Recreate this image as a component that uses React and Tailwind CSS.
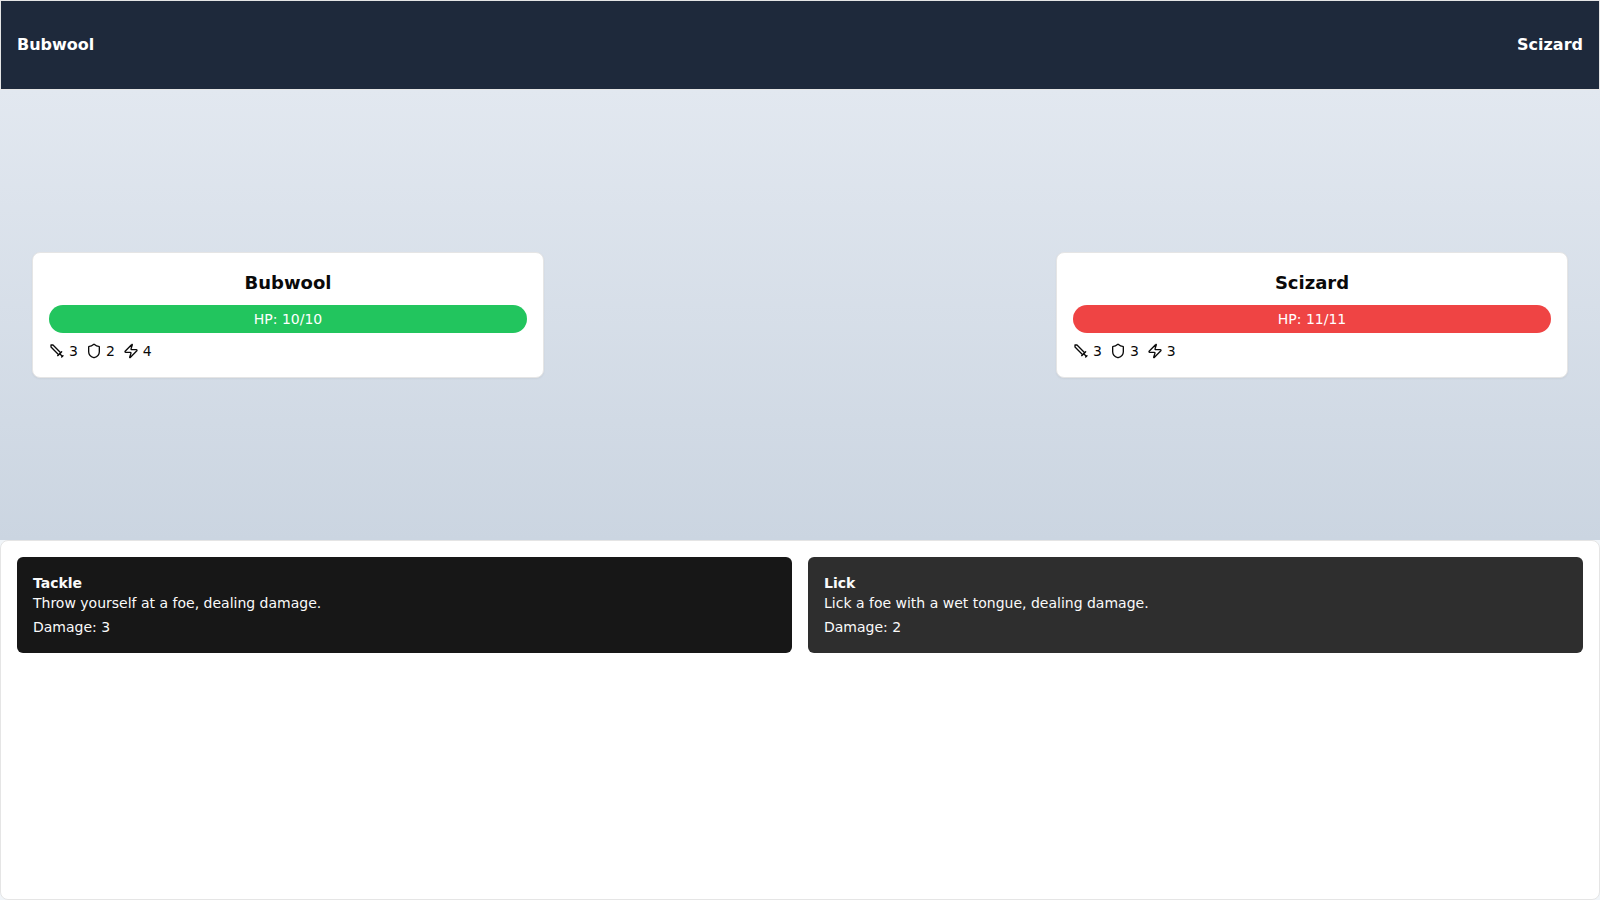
import { Shield, Zap } from "lucide-react";

const creatures = [
  { name: "Bubwool", hp: "10/10", bar: "bg-[#22c55e]", stats: [3, 2, 4] },
  { name: "Scizard", hp: "11/11", bar: "bg-[#ef4444]", stats: [3, 3, 3] },
];

function Sword({ className }) {
  return (
    <svg
      className={className}
      viewBox="0 0 24 24"
      fill="none"
      stroke="currentColor"
      strokeWidth="2"
      strokeLinecap="round"
      strokeLinejoin="round"
    >
      <polyline points="14.5 17.5 3 6 3 3 6 3 17.5 14.5" />
      <line x1="13" x2="19" y1="19" y2="13" />
      <line x1="16" x2="20" y1="16" y2="20" />
      <line x1="19" x2="21" y1="21" y2="19" />
    </svg>
  );
}

const icons = [Sword, Shield, Zap];

function CreatureCard({ creature }) {
  return (
    <div className="w-1/3 rounded-lg border border-[#e5e5e5] bg-white p-4 shadow-xs">
      <h2 className="mb-2 text-center text-lg font-bold">{creature.name}</h2>
      <div className={`mb-2 rounded-full py-1 text-center text-sm text-white ${creature.bar}`}>
        HP: {creature.hp}
      </div>
      <div className="flex gap-2 text-sm">
        {creature.stats.map((value, i) => {
          const Icon = icons[i];
          return (
            <div key={i} className="flex items-center gap-1">
              <Icon className="size-4" />
              {value}
            </div>
          );
        })}
      </div>
    </div>
  );
}

function Move({ name, description, damage, color }) {
  return (
    <button className={`flex h-24 flex-col items-start justify-center rounded-md px-4 text-left text-sm text-[#fafafa] ${color}`}>
      <span className="font-bold">{name}</span>
      <span>{description}</span>
      <span className="mt-1">Damage: {damage}</span>
    </button>
  );
}

export default function App() {
  return (
    <div className="flex h-screen flex-col bg-[#f1f5f9] font-['DejaVu_Sans',sans-serif] text-[#0a0a0a]">
      <header className="flex h-[90px] shrink-0 items-center justify-between border border-[#e5e5e5] bg-[#1e293b] px-4 font-bold text-white">
        <span>Bubwool</span>
        <span>Scizard</span>
      </header>
      <main className="flex h-[450px] shrink-0 items-center justify-between bg-[linear-gradient(to_bottom,#e2e8f0,#cbd5e1)] px-8">
        {creatures.map((c) => (
          <CreatureCard key={c.name} creature={c} />
        ))}
      </main>
      <section className="grid flex-1 grid-cols-2 content-start gap-4 rounded-lg border border-[#e5e5e5] bg-white p-4">
        <Move name="Tackle" description="Throw yourself at a foe, dealing damage." damage={3} color="bg-[#171717]" />
        <Move name="Lick" description="Lick a foe with a wet tongue, dealing damage." damage={2} color="bg-[#2e2e2e]" />
      </section>
    </div>
  );
}
